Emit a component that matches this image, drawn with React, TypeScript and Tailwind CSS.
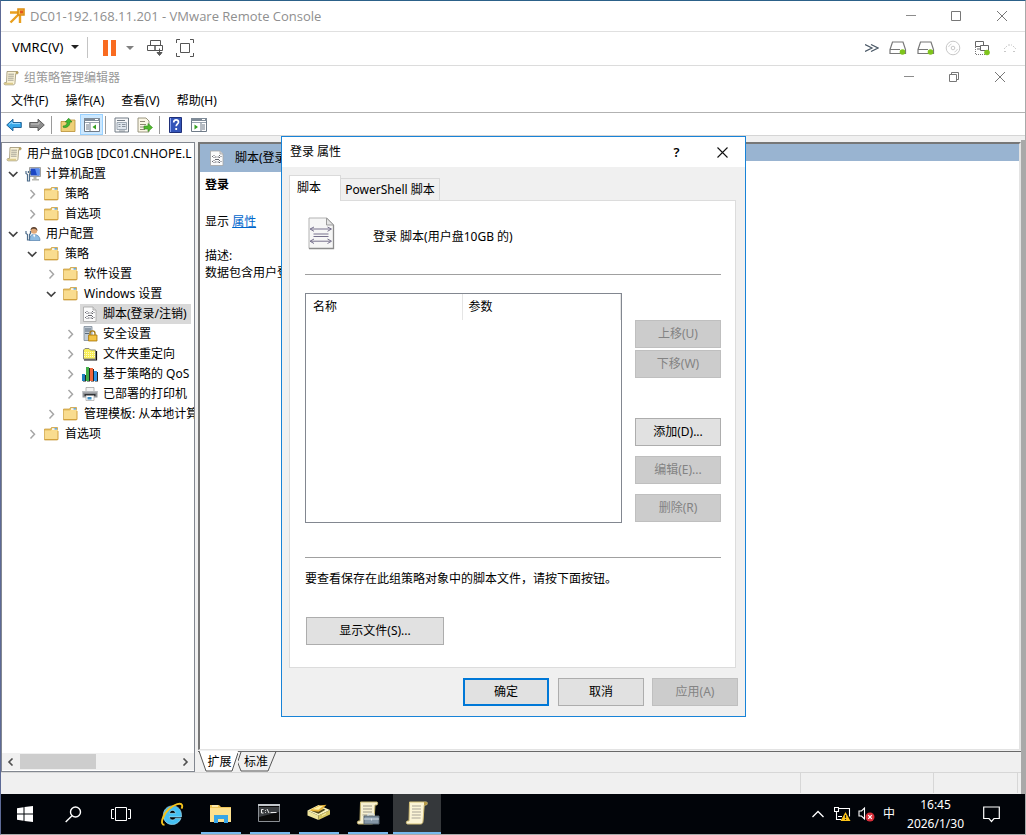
import React from "react";

type IconProps = { className?: string };

const ScrollIcon = ({ className = "size-4" }: IconProps) => (
  <svg viewBox="0 0 16 16" className={className} aria-hidden="true">
    <path d="M4 1.500h10.500c.9 0 .9 2.300-.2 2.300h-1.600L12 12.800c0 1.300-.8 2-1.700 2H2c-1.200 0-1.200-2.300 0-2.300h1.500z" fill="#f9f2d6" stroke="#9a9170" strokeWidth=".8" />
    <path d="M12.800 1.500h1.700c.9 0 .9 2.300-.2 2.300h-1.500z" fill="#b59f5b" />
    <path d="M1.700 12.700h8.300v1.900H2c-.9 0-.9-1.700-.3-1.900z" fill="#dccb8c" />
    <path d="M5.300 4.200h5.700M5.200 6.200h5.700M5 8.200h5.700M4.900 10.200h5.700" stroke="#8f8d86" strokeWidth=".8" />
  </svg>
);

const FolderIcon = () => (
  <svg viewBox="0 0 16 16" className="size-4 shrink-0" aria-hidden="true">
    <path d="M.5 3h6l1-1.500h6V14H.5z" fill="#e5bd5c" stroke="#c69a3a" strokeWidth=".7" />
    <path d="M8 2.300h5V4H8z" fill="#fff" />
    <path d="M10.500 2.200H13v1.500h-2.500z" fill="#4a9be0" />
    <path d="M.8 4.600h6l1-.8h6.200V14H.8z" fill="#f9dc8f" />
    <path d="M.8 13.500H14V5" fill="none" stroke="#d3a13d" strokeWidth="1" />
  </svg>
);

const ComputerIcon = () => (
  <svg viewBox="0 0 16 16" className="size-4 shrink-0" aria-hidden="true">
    <path d="M4.500 1.500h11v9h-11z" fill="#e3e3df" stroke="#8d8d8a" strokeWidth=".8" />
    <path d="M5.500 2.500h9v7h-9z" fill="#1b45c4" />
    <path d="M10 2.500h4.500v7H12z" fill="#5b8ff0" />
    <path d="M8.500 11h3v2h2.500v1.500H7V13h1.500z" fill="#b5b5b0" />
    <path d="M1 5v2.500l1.500 1V15h2V8.500l1-1V5M3.400 5v2" fill="none" stroke="#4e6d8b" strokeWidth="1.200" />
  </svg>
);

const UserIcon = () => (
  <svg viewBox="0 0 16 16" className="size-4 shrink-0" aria-hidden="true">
    <circle cx="9" cy="4.500" r="3.200" fill="#e0a878" />
    <path d="M5.500 4.500C5.500-.2 12.600-.2 12.500 5c-.8-1.500-2-2.500-3.500-2.300C7.500 2.500 6.500 3 5.500 4.500z" fill="#574032" />
    <path d="M4.500 14.500c-.2-4.500 1.800-6 4.500-6s6 1.500 6 6z" fill="#8dbbe2" stroke="#5380ac" strokeWidth=".7" />
    <path d="M8 8.500l1.200 3 1.300-3z" fill="#fff" />
    <path d="M1 5v2.500l1.500 1V14h2V8.500l1-1V5" fill="none" stroke="#4e6d8b" strokeWidth="1.200" />
  </svg>
);

const ScriptIcon = ({ className = "size-4 shrink-0" }: IconProps) => (
  <svg viewBox="0 0 16 16" className={className} aria-hidden="true">
    <path d="M1.500 1h9.500l3 3V15.500H1.500z" fill="#fbfbfb" stroke="#a4a4a4" strokeWidth=".8" />
    <path d="M11 1v3h3" fill="#ddd" stroke="#a4a4a4" strokeWidth=".8" />
    <path d="M4.500 5.500h1M10 5.500h1M3 6.500h1M11.500 6.500h1M4.500 7.500h1M10 7.500h1M6 7h1.500M8.500 7H10M4.500 10.500h1M10 10.500h1M3 11.500h1M11.500 11.500h1M4.500 12.500h1M10 12.500h1M6 12h1.500M8.500 12H10M6 9.500h4" fill="none" stroke="#66666e" strokeWidth="1" />
  </svg>
);

const BigScriptIcon = () => (
  <svg viewBox="0 0 27 33" className="h-[33px] w-[27px]" aria-hidden="true">
    <path d="M1 1h18l6.500 6.500V31.500H1z" fill="#f6f6f6" stroke="#b3b3b3" />
    <path d="M25.500 8v23.500H1" fill="none" stroke="#8c8c8c" strokeWidth="1.300" />
    <path d="M18.500 1v7h7z" fill="#e4e4e4" stroke="#9b9b9b" />
    <path d="M6 10l-4 2 4 2.300M19.500 10l4 2-4 2.300M3 12h19.500M5.500 17h15M5.500 19.500h15M6 22l-4 2.200L6 26.500M19.500 22l4 2.200-4 2.300M3 24.200h19.500" fill="none" stroke="#77718d" strokeWidth="1" />
  </svg>
);

const SecurityIcon = () => (
  <svg viewBox="0 0 16 16" className="size-4 shrink-0" aria-hidden="true">
    <path d="M2 .5h8v14H2z" fill="#c2ccd6" stroke="#7d8a97" strokeWidth=".8" />
    <path d="M3 3h6M3 5h6M3 7.500h4" stroke="#5b6b7a" />
    <path d="M8 9V7.500c0-3.500 5-3.500 5 0V9" fill="none" stroke="#a77c16" strokeWidth="1.400" />
    <path d="M6.500 9h8.500v6H6.500z" fill="#efb72d" stroke="#a77c16" strokeWidth=".8" />
    <path d="M7.500 11h6.500M7.500 13h6.500" stroke="#fbdc74" strokeWidth=".7" />
  </svg>
);

const RedirectFolderIcon = () => (
  <svg viewBox="0 0 16 16" className="size-4 shrink-0" aria-hidden="true">
    <path d="M1.500 13V4L3 2.500h4L8.500 4H13.500v9z" fill="#f7ee58" stroke="#8a8a80" />
    <path d="M2 6.500h11M2 8.500h11M2 10.500h11" stroke="#fffbc8" strokeDasharray="1 1" />
    <path d="M2 14h12.500V5" fill="none" stroke="#111" strokeWidth="1.200" />
  </svg>
);

const ChartIcon = () => (
  <svg viewBox="0 0 16 16" className="size-4 shrink-0" aria-hidden="true">
    <path d="M1 9h3v6.500H1zM5 2h3v13.500H5zM9 3h3v12.500H9zM13 6h3v9.500h-3z" fill="#222" />
    <path d="M0 8h3v7H0z" fill="#1f7fbe" />
    <path d="M4 1h3v14H4z" fill="#42b047" />
    <path d="M8 2h3v13H8z" fill="#f0663c" />
    <path d="M12 5h3v10h-3z" fill="#2b93e6" />
  </svg>
);

const PrinterIcon = () => (
  <svg viewBox="0 0 16 16" className="size-4 shrink-0" aria-hidden="true">
    <path d="M4 1.500h8V6H4z" fill="#f4f4f4" stroke="#999" strokeWidth=".7" />
    <path d="M.5 5h15v6.500H.5z" fill="#8f9296" />
    <path d="M.5 5h15v1.500H.5z" fill="#babdc0" />
    <path d="M2.500 8h11v2h-11z" fill="#303235" />
    <path d="M4 9.500h8v5H4z" fill="#fff" stroke="#999" strokeWidth=".6" />
    <path d="M5.500 11h4v2.500h-4z" fill="#3d8fc4" />
  </svg>
);

const Chevron = ({ open }: { open: boolean }) => (
  <svg viewBox="0 0 16 16" className="size-4 shrink-0" aria-hidden="true">
    {open ? (
      <path d="M4 6l4.200 4L12.400 6" fill="none" stroke="#404040" strokeWidth="1.700" />
    ) : (
      <path d="M6.500 4l4 4.200-4 4.200" fill="none" stroke="#a6a6a6" strokeWidth="1.500" />
    )}
  </svg>
);

type Node = {
  label: string;
  indent: string;
  icon: React.ReactNode;
  open?: boolean;
  leaf?: boolean;
  selected?: boolean;
};

const L1 = "pl-[3px]";
const L2 = "pl-[22px]";
const L3 = "pl-[41px]";
const L4 = "pl-[60px]";

const nodes: Node[] = [
  { label: "计算机配置", indent: L1, icon: <ComputerIcon />, open: true },
  { label: "策略", indent: L2, icon: <FolderIcon /> },
  { label: "首选项", indent: L2, icon: <FolderIcon /> },
  { label: "用户配置", indent: L1, icon: <UserIcon />, open: true },
  { label: "策略", indent: L2, icon: <FolderIcon />, open: true },
  { label: "软件设置", indent: L3, icon: <FolderIcon /> },
  { label: "Windows 设置", indent: L3, icon: <FolderIcon />, open: true },
  { label: "脚本(登录/注销)", indent: L4, icon: <ScriptIcon />, leaf: true, selected: true },
  { label: "安全设置", indent: L4, icon: <SecurityIcon /> },
  { label: "文件夹重定向", indent: L4, icon: <RedirectFolderIcon /> },
  { label: "基于策略的 QoS", indent: L4, icon: <ChartIcon /> },
  { label: "已部署的打印机", indent: L4, icon: <PrinterIcon /> },
  { label: "管理模板: 从本地计算", indent: L3, icon: <FolderIcon /> },
  { label: "首选项", indent: L2, icon: <FolderIcon /> },
];

function Tree() {
  return (
    <aside className="flex w-[194px] shrink-0 flex-col border border-[#828790] bg-white">
      <ul className="flex-1 overflow-hidden whitespace-nowrap pt-px">
        <li className="flex h-5 items-center gap-[5px] pl-1">
          <ScrollIcon className="size-4 shrink-0" />
          <span>用户盘10GB [DC01.CNHOPE.L</span>
        </li>
        {nodes.map((n, i) => (
          <li key={i} className={`flex h-5 items-center gap-0.5 ${n.indent}`}>
            {n.leaf ? <span className="w-4 shrink-0" /> : <Chevron open={!!n.open} />}
            <span className={n.selected ? "flex h-5 items-center gap-[5px] bg-[#d9d9d9] pl-0.5 pr-1" : "flex h-5 items-center gap-[5px] pl-0.5"}>
              {n.icon}
              <span>{n.label}</span>
            </span>
          </li>
        ))}
      </ul>
      <div className="flex h-[17px] items-center bg-[#f0f0f0]">
        <button aria-label="向左滚动" className="flex w-[18px] justify-center">
          <svg viewBox="0 0 8 8" className="size-2"><path d="M5.500.5L2 4l3.500 3.500" fill="none" stroke="#505050" strokeWidth="1.600" /></svg>
        </button>
        <div className="h-[15px] w-[76px] bg-[#cdcdcd]" />
        <button aria-label="向右滚动" className="ml-auto flex w-[18px] justify-center">
          <svg viewBox="0 0 8 8" className="size-2"><path d="M2.500.5L6 4 2.500 7.500" fill="none" stroke="#505050" strokeWidth="1.600" /></svg>
        </button>
      </div>
      <div className="h-px" />
    </aside>
  );
}

function WindowControls({ restore }: { restore?: boolean }) {
  return (
    <div className={restore ? "ml-auto flex pr-[2px]" : "ml-auto flex"}>
      <button aria-label="最小化" className="flex w-[45px] items-center justify-center">
        <svg viewBox="0 0 10 10" className="size-[10px]"><path d="M0 4.500h10" stroke="#8c8c8c" /></svg>
      </button>
      <button aria-label={restore ? "还原" : "最大化"} className="flex w-[45px] items-center justify-center">
        <svg viewBox="0 0 10 10" className="size-[10px]">
          {restore ? (
            <path d="M.5 2.500h7v7h-7zM2.500 2V.5h7v7H8" fill="none" stroke="#777" />
          ) : (
            <path d="M.5.5h9v9h-9z" fill="none" stroke="#777" />
          )}
        </svg>
      </button>
      <button aria-label="关闭" className="flex w-[47px] items-center justify-center">
        <svg viewBox="0 0 10 10" className="size-[10px]"><path d="M0 0l10 10M10 0L0 10" stroke="#777" /></svg>
      </button>
    </div>
  );
}

const DriveIcon = () => (
  <svg viewBox="0 0 18 16" className="h-4 w-[18px]" aria-hidden="true">
    <path d="M3.500 2h10.500l2.500 7.500v4H1v-4zM1 9.500h10" fill="none" stroke="#777" strokeWidth="1.200" />
    <circle cx="13.500" cy="12" r="2.800" fill="#7fc41c" />
  </svg>
);

function ConsoleBar() {
  return (
    <div className="flex h-[34px] items-center border-b border-[#dcdcdc] bg-white pb-0.5 pl-[11px] pr-2">
      <button className="flex items-center gap-[7px] pb-0.5">
        <span className="text-[13px]">VMRC(V)</span>
        <svg viewBox="0 0 8 4" className="h-1 w-2"><path d="M0 0h8L4 4z" fill="#222" /></svg>
      </button>
      <div className="ml-2 h-[21px] w-px bg-[#c4c4c4]" />
      <button aria-label="暂停" className="ml-[15px]">
        <svg viewBox="0 0 13 16" className="h-4 w-[13px]"><path d="M0 0h5v16H0zM8 0h5v16H8z" fill="#f96b20" /></svg>
      </button>
      <button aria-label="电源选项" className="ml-[10px]">
        <svg viewBox="0 0 8 4" className="h-1 w-2"><path d="M0 0h8L4 4z" fill="#808080" /></svg>
      </button>
      <button aria-label="发送按键" className="ml-[13px]">
        <svg viewBox="0 0 18 18" className="size-[18px]">
          <path d="M3.500 1.500h10v5h-10zM.5 6.500h7.500v5H.5zM8 6.500h7.500v5H8z" fill="#fff" stroke="#555" />
          <path d="M12.500 9.500v6M10 13.500h5l-2.500 3z" fill="#555" stroke="#555" />
        </svg>
      </button>
      <button aria-label="全屏" className="ml-[11px]">
        <svg viewBox="0 0 18 18" className="size-[18px]">
          <path d="M.5 4V.5H4M14 .5h3.500V4M17.500 14v3.500H14M4 17.500H.5V14M4.500 4.500h9v9h-9z" fill="none" stroke="#555" />
        </svg>
      </button>
      <div className="ml-auto flex items-center gap-[10px]">
        <svg viewBox="0 0 14 8" className="h-2 w-[14px]"><path d="M0 .5L7 4 0 7.500M6 .5L13 4 6 7.500" fill="none" stroke="#4a5866" strokeWidth="1.200" /></svg>
        <DriveIcon />
        <DriveIcon />
        <svg viewBox="0 0 16 16" className="size-4">
          <circle cx="8" cy="8" r="6.800" fill="none" stroke="#c8c8c8" />
          <circle cx="8" cy="8" r="1.800" fill="none" stroke="#c8c8c8" />
          <path d="M3.500 7a5 5 0 013-3M12.500 9a5 5 0 01-3 3" fill="none" stroke="#d5d5d5" />
        </svg>
        <svg viewBox="0 0 18 16" className="ml-[2px] h-4 w-[18px]">
          <path d="M2.500 1.500h8v5h-8z" fill="#fff" stroke="#666" />
          <path d="M2.500 7v7M3 14.500h9" stroke="#777" strokeDasharray="1 1" />
          <path d="M7.500 5.500h8v5h-8zM4 9h3" fill="#fff" stroke="#666" />
          <circle cx="14" cy="12.500" r="2.800" fill="#7fc41c" />
        </svg>
        <svg viewBox="0 0 14 10" className="ml-[2px] h-[10px] w-[14px]"><path d="M1 6l3-3M10 3l3 3M5 2h4M1 8.500h3M10 8.500h3" stroke="#c8c8c8" strokeDasharray="2 1" /></svg>
      </div>
    </div>
  );
}

const Divider = () => <div className="h-[18px] w-px bg-[#9a9a9a]" />;

function MmcToolbar() {
  return (
    <div className="flex h-[23px] items-center border-b border-[#d5d5d5] bg-white pl-[5px] pt-px">
      <button aria-label="后退">
        <svg viewBox="0 0 16 16" className="size-4"><path d="M.7 8L7 2.200v3.300h8.300v5H7v3.300z" fill="#35a7e8" stroke="#17598f" strokeWidth=".9" /><path d="M3 7.500l3-2.500v1.600h8" fill="none" stroke="#9ddcff" /></svg>
      </button>
      <button aria-label="前进" className="ml-[7px]">
        <svg viewBox="0 0 16 16" className="size-4"><path d="M15.300 8L9 2.200v3.300H.7v5H9v3.300z" fill="#8e8e8e" stroke="#555" strokeWidth=".9" /><path d="M2 7h8V5" fill="none" stroke="#c5c5c5" /></svg>
      </button>
      <div className="ml-[6px]"><Divider /></div>
      <button aria-label="向上" className="ml-2">
        <svg viewBox="0 0 16 16" className="size-4"><path d="M1 4.500h6l1.500-1.500H15V14.500H1z" fill="#efd078" stroke="#b98f33" strokeWidth=".8" /><path d="M3 9c3 0 4-1.500 4-4H5.200L8.700 1.200 12 5h-2c0 4-3 6-6.500 5.500z" fill="#40b832" stroke="#268018" strokeWidth=".6" /></svg>
      </button>
      <button aria-label="显示/隐藏控制台树" className="ml-1 flex h-[21px] w-[23px] items-center justify-center border border-[#99d1ff] bg-[#cce8ff]">
        <svg viewBox="0 0 16 14" className="h-[14px] w-4"><path d="M.5.5h15v13H.5z" fill="#fff" stroke="#6f7b88" /><path d="M0 0h16v3H0z" fill="#7f8b98" /><path d="M11 1.500h3" stroke="#fff" /><path d="M1 4.500h14" stroke="#9aa5b0" /><path d="M6 5v8.500" stroke="#6f7b88" /><path d="M2 7h3M2 9h3M2 11h3" stroke="#6f7b88" /><path d="M12 6.500v5L8.500 9z" fill="#35a020" /></svg>
      </button>
      <div className="ml-0.5"><Divider /></div>
      <button aria-label="属性" className="ml-2">
        <svg viewBox="0 0 16 16" className="size-4"><path d="M1 1h13.500v14H1z" fill="#f6f7f8" stroke="#727c86" /><path d="M3 3.500h8" stroke="#727c86" /><path d="M3 5.500h9.500v7H3z" fill="#dfe6ed" stroke="#8b98a5" strokeWidth=".8" /><path d="M4.500 7.500h2M8 7.500h3.500M4.500 9.500h2M8 9.500h3.500M5 14h6" stroke="#727c86" strokeWidth=".8" /></svg>
      </button>
      <button aria-label="导出列表" className="ml-[7px]">
        <svg viewBox="0 0 16 16" className="size-4"><path d="M1 1h8l3 3v11H1z" fill="#fbf7e6" stroke="#8f8a74" strokeWidth=".9" /><path d="M3 4.500h5M3 7.500h6M3 10h4M3 12.500h5" stroke="#8f8a74" /><path d="M7 9h4V6.500l4.500 4-4.500 4V12H7z" fill="#52b92e" stroke="#2e8a17" strokeWidth=".6" /></svg>
      </button>
      <div className="ml-[6px]"><Divider /></div>
      <button aria-label="帮助" className="ml-2">
        <svg viewBox="0 0 16 16" className="size-4"><path d="M1.500.5h12v15h-12z" fill="#3354b8" stroke="#1f2f78" /><path d="M2.500 1v14" stroke="#8da6ef" /><path d="M5.700 5.500c0-3.500 5-3.300 4.800-.3-.1 1.600-2.300 1.800-2.300 4" fill="none" stroke="#fff" strokeWidth="1.700" /><path d="M7.300 11h1.800v2H7.300z" fill="#fff" /></svg>
      </button>
      <button aria-label="显示/隐藏操作窗格" className="ml-[7px]">
        <svg viewBox="0 0 16 14" className="h-[14px] w-4"><path d="M.5.5h15v13H.5z" fill="#fff" stroke="#6f7b88" /><path d="M0 0h16v3H0z" fill="#7f8b98" /><path d="M11 1.500h3" stroke="#fff" /><path d="M1 4.500h14" stroke="#9aa5b0" /><path d="M10 5v8.500" stroke="#6f7b88" /><path d="M11 7h3M11 9h3M11 11h3" stroke="#6f7b88" /><path d="M3.500 6.500v5L7 9z" fill="#35a020" /></svg>
      </button>
    </div>
  );
}

function DetailPane() {
  return (
    <section className="flex flex-1 flex-col">
      <div className="flex flex-1 border-b border-l-2 border-r-2 border-t-2 border-b-[#e3e3e3] border-l-[#777] border-r-[#e3e3e3] border-t-[#777] bg-white">
        <div className="w-[200px] shrink-0 whitespace-nowrap leading-4">
          <header className="flex h-7 items-center gap-[10px] bg-[#99b4d1] pl-[9px]">
            <ScriptIcon className="size-4 shrink-0" />
            <span>脚本(登录</span>
          </header>
          <div className="pl-[5px] pt-[5px]">
            <h2 className="font-bold">登录</h2>
            <p className="mt-[21px]">
              显示 <a href="#properties" className="text-[#0066cc] underline">属性</a>
            </p>
            <p className="mt-[17px] leading-[17px]">描述:</p>
            <p className="leading-[17px]">数据包含用户登</p>
          </div>
        </div>
        <div className="h-[17px] flex-1 bg-[#99b4d1]" />
      </div>
      <div className="mt-px flex h-[21px] border-t border-[#696969]">
        <button className="relative h-5 w-10">
          <svg viewBox="0 0 40 21" className="absolute bottom-0 left-0 h-[21px] w-10"><path d="M1 0l7 20h26l6-20z" fill="#fff" /><path d="M1 0l7 20h26l6-18" fill="none" stroke="#555" /></svg>
          <span className="relative pl-[3px]">扩展</span>
        </button>
        <button className="relative h-5 w-[39px]">
          <svg viewBox="0 0 39 21" className="absolute bottom-0 left-0 h-[21px] w-[39px]"><path d="M-.5 11l3.500 9h27l8-19.500M3 1L0 10" fill="none" stroke="#555" /></svg>
          <span className="relative pr-[3px]">标准</span>
        </button>
      </div>
    </section>
  );
}

const BTN = "h-7 border text-center";
const ENABLED = "border-[#adadad] bg-[#e1e1e1] text-black";
const DISABLED = "border-[#bfbfbf] bg-[#cccccc] text-[#838383]";

function Dialog() {
  return (
    <div role="dialog" aria-label="登录 属性" className="absolute left-[280px] top-[135px] flex w-[465px] flex-col border border-[#1883d7] bg-[#f0f0f0]">
      <div className="flex h-[30px] items-center bg-white pl-2">
        <span>登录 属性</span>
        <button aria-label="帮助" className="ml-auto w-[45px] text-[13px] font-semibold">?</button>
        <button aria-label="关闭" className="flex w-[46px] justify-center">
          <svg viewBox="0 0 11 11" className="size-[11px]"><path d="M.5.5l10 10M10.500.5l-10 10" stroke="#111" strokeWidth="1.100" /></svg>
        </button>
      </div>
      <div className="flex flex-col px-[7px] pt-2">
        <div role="tablist" className="flex items-end pr-2">
          <button role="tab" aria-selected="true" className="z-10 -mb-px h-[26px] w-[52px] border border-b-0 border-[#dadada] bg-white pb-0.5 pr-[12px] text-center">脚本</button>
          <button role="tab" aria-selected="false" className="h-[22px] w-[99px] border border-b-0 border-l-0 border-[#d9d9d9]">PowerShell 脚本</button>
        </div>
        <div className="mr-[2px] flex h-[468px] flex-col border border-[#dcdcdc] bg-white px-[15px] pt-4">
          <div className="flex h-[33px] items-center gap-[38px] pl-[3px]">
            <BigScriptIcon />
            <span className="pt-[7px]">登录 脚本(用户盘10GB 的)</span>
          </div>
          <hr className="mr-[-1px] mt-6 border-[#a0a0a0]" />
          <div className="mr-[-1px] mt-[18px] flex items-stretch justify-between">
            <div className="h-[230px] w-[317px] border border-[#828790]">
              <table className="w-full table-fixed border-collapse text-left">
                <thead>
                  <tr className="h-[26px]">
                    <th className="w-[156px] border-r border-[#e5e5e5] pl-[7px] font-normal">名称</th>
                    <th className="border-r border-[#e5e5e5] pl-[6px] font-normal">参数</th>
                  </tr>
                </thead>
                <tbody />
              </table>
            </div>
            <div className="flex w-[86px] flex-col pt-[27px]">
              <button disabled className={`${BTN} ${DISABLED}`}>上移(U)</button>
              <button disabled className={`${BTN} ${DISABLED} mt-0.5`}>下移(W)</button>
              <button className={`${BTN} ${ENABLED} mt-10`}>添加(D)...</button>
              <button disabled className={`${BTN} ${DISABLED} mt-[10px]`}>编辑(E)...</button>
              <button disabled className={`${BTN} ${DISABLED} mt-[10px]`}>删除(R)</button>
            </div>
          </div>
          <hr className="mr-[-1px] mt-[34px] border-[#a0a0a0]" />
          <p className="mt-[13px] leading-4">要查看保存在此组策略对象中的脚本文件，请按下面按钮。</p>
          <button className={`${BTN} ${ENABLED} ml-px mt-[30px] w-[138px]`}>显示文件(S)...</button>
        </div>
        <div className="flex justify-end gap-2 py-[10px]">
          <button className="mr-px h-7 w-[86px] border-2 border-[#0078d7] bg-[#e1e1e1]">确定</button>
          <button className={`${BTN} ${ENABLED} w-[86px]`}>取消</button>
          <button disabled className={`${BTN} ${DISABLED} w-[86px]`}>应用(A)</button>
        </div>
      </div>
    </div>
  );
}

const IeIcon = () => (
  <svg viewBox="0 0 24 24" className="size-6" aria-hidden="true">
    <path d="M21 16.200c-1.500 4-4.900 6.300-8.700 6.300-5.200 0-9-3.700-9-9.100 0-5.600 3.800-9.500 9.200-9.500 5.900 0 9.500 4.100 9 11H9.300c.2 1.900 1.500 3 3.300 3 1.400 0 2.300-.6 2.900-1.700zM9.400 11.300h6.100c-.1-1.800-1.300-2.900-2.900-2.900s-2.900 1.100-3.200 2.900z" fill="#45c0f2" stroke="#b5eafc" strokeWidth=".6" />
    <path d="M4.500 22.800C-.5 23 2.500 13 9 7c5.500-5 12-6.500 13-4 .5 1.200.1 2.500-.5 3.700" fill="none" stroke="#f4c21c" strokeWidth="1.900" />
  </svg>
);

const ExplorerIcon = () => (
  <svg viewBox="0 0 24 24" className="size-6" aria-hidden="true">
    <path d="M1 4h9l2 2h10v15H1z" fill="#f0c659" />
    <path d="M1 7h21v14H1z" fill="#fde18f" />
    <path d="M3 5h6" stroke="#fff3c5" strokeWidth="1.500" />
    <path d="M5 14h14v8h-4v-4H9v4H5z" fill="#37a5e6" />
  </svg>
);

const CmdIcon = () => (
  <svg viewBox="0 0 24 24" className="size-6" aria-hidden="true">
    <path d="M.5 3.500h21v17H.5z" fill="#0b0b0b" stroke="#8a8f94" />
    <path d="M0 3h22v2H0z" fill="#c3c8cc" />
    <path d="M1 6h20v5L1 16z" fill="#3a3d40" />
    <path d="M5.500 8.500h-2v3.500h2M7.500 9v.8M7.500 11v.8M9 8l2 4M12.500 11.500h6" fill="none" stroke="#fff" strokeWidth=".9" />
  </svg>
);

const BoxIcon = () => (
  <svg viewBox="0 0 24 24" className="size-6" aria-hidden="true">
    <path d="M.5 9.500l11 5V19L.5 14.500z" fill="#efe59c" />
    <path d="M11.500 14.500L23 9v4.500L11.500 19z" fill="#d6c763" />
    <path d="M.5 9.500L11.500 4 23 9l-11.500 5.500z" fill="#faf4bd" />
    <path d="M2.500 9.300L12 4.500l7.500-.8-8 8.300z" fill="#e6b236" />
    <path d="M5.500 8.300l7-3.300 4-.3-5 4z" fill="#fff2a6" />
    <path d="M4 9.800l7.500 3 7-4-2-1-5 3z" fill="#4f4718" />
    <path d="M15 14.500l4-2" stroke="#f7f0b1" />
  </svg>
);

const GpmcIcon = () => (
  <svg viewBox="0 0 24 24" className="size-6" aria-hidden="true">
    <path d="M4.500 1h16.500c1 0 .8 3-.3 3h-1.700L18 20c0 2-1 3-2.500 3H2.500c-1.500 0-1.500-3 0-3h1.500z" fill="#f7f0d0" stroke="#c5b46c" />
    <path d="M7 5h9M7 8h9M7 11h9M6.500 14h5" stroke="#9a9688" />
    <path d="M8 15h15v8H8z" fill="#8496a5" stroke="#56646f" />
    <path d="M12 15v-2h6v2M8 18h15M15.500 17.500v2" fill="none" stroke="#d4dde4" />
  </svg>
);

const TaskScrollIcon = () => (
  <svg viewBox="0 0 24 24" className="size-6" aria-hidden="true">
    <path d="M4.500 1h17c1 0 .8 3-.3 3h-2L18 20c0 2-1 3-2.500 3H2.500c-1.500 0-1.500-3 0-3h1.500z" fill="#fbf4d6" stroke="#d5c177" />
    <path d="M19 1h2.500c1 0 .8 3-.3 3H19z" fill="#b79a48" />
    <path d="M7 5h9M7 8h9M7 11h9M6.800 14h9M6.600 17h9" stroke="#a8a396" />
  </svg>
);

const runningApps = [
  { label: "文件资源管理器", icon: <ExplorerIcon /> },
  { label: "命令提示符", icon: <CmdIcon /> },
  { label: "服务器工具", icon: <BoxIcon /> },
  { label: "组策略管理", icon: <GpmcIcon /> },
];

const SLOT = "flex w-12 items-center justify-center";

function Taskbar() {
  return (
    <footer className="flex h-10 bg-[#010409] text-white">
      <button aria-label="开始" className={SLOT}>
        <svg viewBox="0 0 16 16" className="size-4"><path d="M0 2.200L6.500 1.300v6.200H0zM7.500 1.100L16 0v7.500H7.500zM0 8.500h6.500v6.200L0 13.800zM7.500 8.500H16V16l-8.500-1.100z" fill="#fff" /></svg>
      </button>
      <button aria-label="搜索" className={SLOT}>
        <svg viewBox="0 0 17 17" className="size-[17px]"><circle cx="10.500" cy="6" r="5" fill="none" stroke="#fff" strokeWidth="1.400" /><path d="M7 9.700L.7 16" stroke="#fff" strokeWidth="1.400" /></svg>
      </button>
      <button aria-label="任务视图" className={SLOT}>
        <svg viewBox="0 0 20 14" className="h-[14px] w-5"><path d="M4.500.5h11v13h-11zM3 2.500H.5v9H3M17 2.500h2.500v9H17" fill="none" stroke="#fff" /></svg>
      </button>
      <button aria-label="Internet Explorer" className={`${SLOT} ml-[3px]`}><IeIcon /></button>
      {runningApps.map((a) => (
        <button key={a.label} aria-label={a.label} className="ml-px flex w-12 flex-col items-center">
          <span className="flex flex-1 items-center">{a.icon}</span>
          <span className="h-0.5 w-10 bg-[#76b9ed]" />
        </button>
      ))}
      <button aria-label="组策略管理编辑器" className="ml-px flex w-12 flex-col items-center bg-[#35383b]">
        <span className="flex flex-1 items-center"><TaskScrollIcon /></span>
        <span className="h-0.5 w-full bg-[#76b9ed]" />
      </button>
      <div className="ml-auto flex items-center pr-[25px]">
        <svg viewBox="0 0 12 8" className="h-2 w-3"><path d="M.5 7L6 1.500 11.500 7" fill="none" stroke="#fff" strokeWidth="1.300" /></svg>
        <svg viewBox="0 0 17 16" className="ml-[10px] h-4 w-[17px]">
          <path d="M5 2.500h10.500v8M.5 1.500h4v4h-4zM2.500 5.500v8h5M4 10.500h4" fill="none" stroke="#fff" strokeWidth="1.100" />
          <path d="M11.500 6L16.500 15H6.500z" fill="#fcc419" /><path d="M11.500 9v3M11.500 13v1" stroke="#222" strokeWidth="1.200" />
        </svg>
        <svg viewBox="0 0 17 16" className="ml-[7px] h-4 w-[17px]">
          <path d="M1 5h2.500L6.500 2v11l-3-3H1z" fill="none" stroke="#fff" strokeWidth="1.100" />
          <circle cx="12" cy="11" r="4.500" fill="#d92f3a" /><path d="M10.200 9.200l3.600 3.600M13.800 9.200l-3.600 3.600" stroke="#fff" strokeWidth="1.200" />
        </svg>
        <span className="ml-2">中</span>
        <div className="ml-3 text-center leading-[19px]">
          <div>16:45</div>
          <div>2026/1/30</div>
        </div>
        <button aria-label="通知" className="ml-[19px]">
          <svg viewBox="0 0 17 17" className="size-[17px]"><path d="M.7 1h15.600v11.500h-5.300L8.500 15.500 6 12.500H.7z" fill="none" stroke="#fff" strokeWidth="1.200" /></svg>
        </button>
      </div>
    </footer>
  );
}

export default function App() {
  return (
    <div className="relative flex min-h-screen flex-col border-b border-l border-r border-t border-b-[#a9a9a9] border-l-[#5d6a96] border-r-[#a9a9a9] border-t-[#2c6189] bg-[#f0f0f0] font-['Noto_Sans','Noto_Sans_CJK_SC',sans-serif] text-[12px] leading-4 text-black">
      <div className="flex h-[31px] items-stretch border-b border-[#e0e0e0] bg-white pl-2">
        <div className="flex items-center gap-[5px]">
          <svg viewBox="0 0 16 16" className="size-4" aria-hidden="true">
            <path d="M1 4.500h7.500L11 7v8M10 6L1.500 14.500" fill="none" stroke="#e9a01f" strokeWidth="2.400" />
            <path d="M9 1h6v6H9z" fill="#f3c04e" stroke="#dd8f16" strokeWidth="1.600" />
            <path d="M11 2.500h3v3h-3z" fill="#e2571e" />
          </svg>
          <span className="font-['Open_Sans','Noto_Sans_CJK_SC',sans-serif] text-[13px] text-[#8f8f8f]">DC01-192.168.11.201 - VMware Remote Console</span>
        </div>
        <WindowControls />
      </div>
      <ConsoleBar />
      <div className="flex h-[22px] bg-white pl-[2px]">
        <div className="flex items-center gap-[5px] pt-px">
          <ScrollIcon />
          <span className="text-[#999]">组策略管理编辑器</span>
        </div>
        <WindowControls restore />
      </div>
      <nav className="flex h-[25px] items-center gap-[17px] border-b border-[#b2b2b2] bg-white pl-[10px] pt-0.5">
        <button>文件(F)</button>
        <button>操作(A)</button>
        <button>查看(V)</button>
        <button>帮助(H)</button>
      </nav>
      <MmcToolbar />
      <div className="flex flex-1">
        <div className="flex flex-1 flex-col pt-[6px]">
          <main className="flex flex-1 gap-[3px]">
            <Tree />
            <DetailPane />
          </main>
          <div className="flex h-[22px] items-stretch justify-end border-t border-[#d7d7d7] pb-px">
            <div className="w-[133px] border-l border-[#d7d7d7]" />
            <div className="w-[85px] border-l border-r border-[#d7d7d7]" />
            <div className="w-[3px]" />
          </div>
        </div>
        <div className="mt-1 w-1 bg-[#a9a9a9]" />
      </div>
      <Taskbar />
      <Dialog />
    </div>
  );
}
